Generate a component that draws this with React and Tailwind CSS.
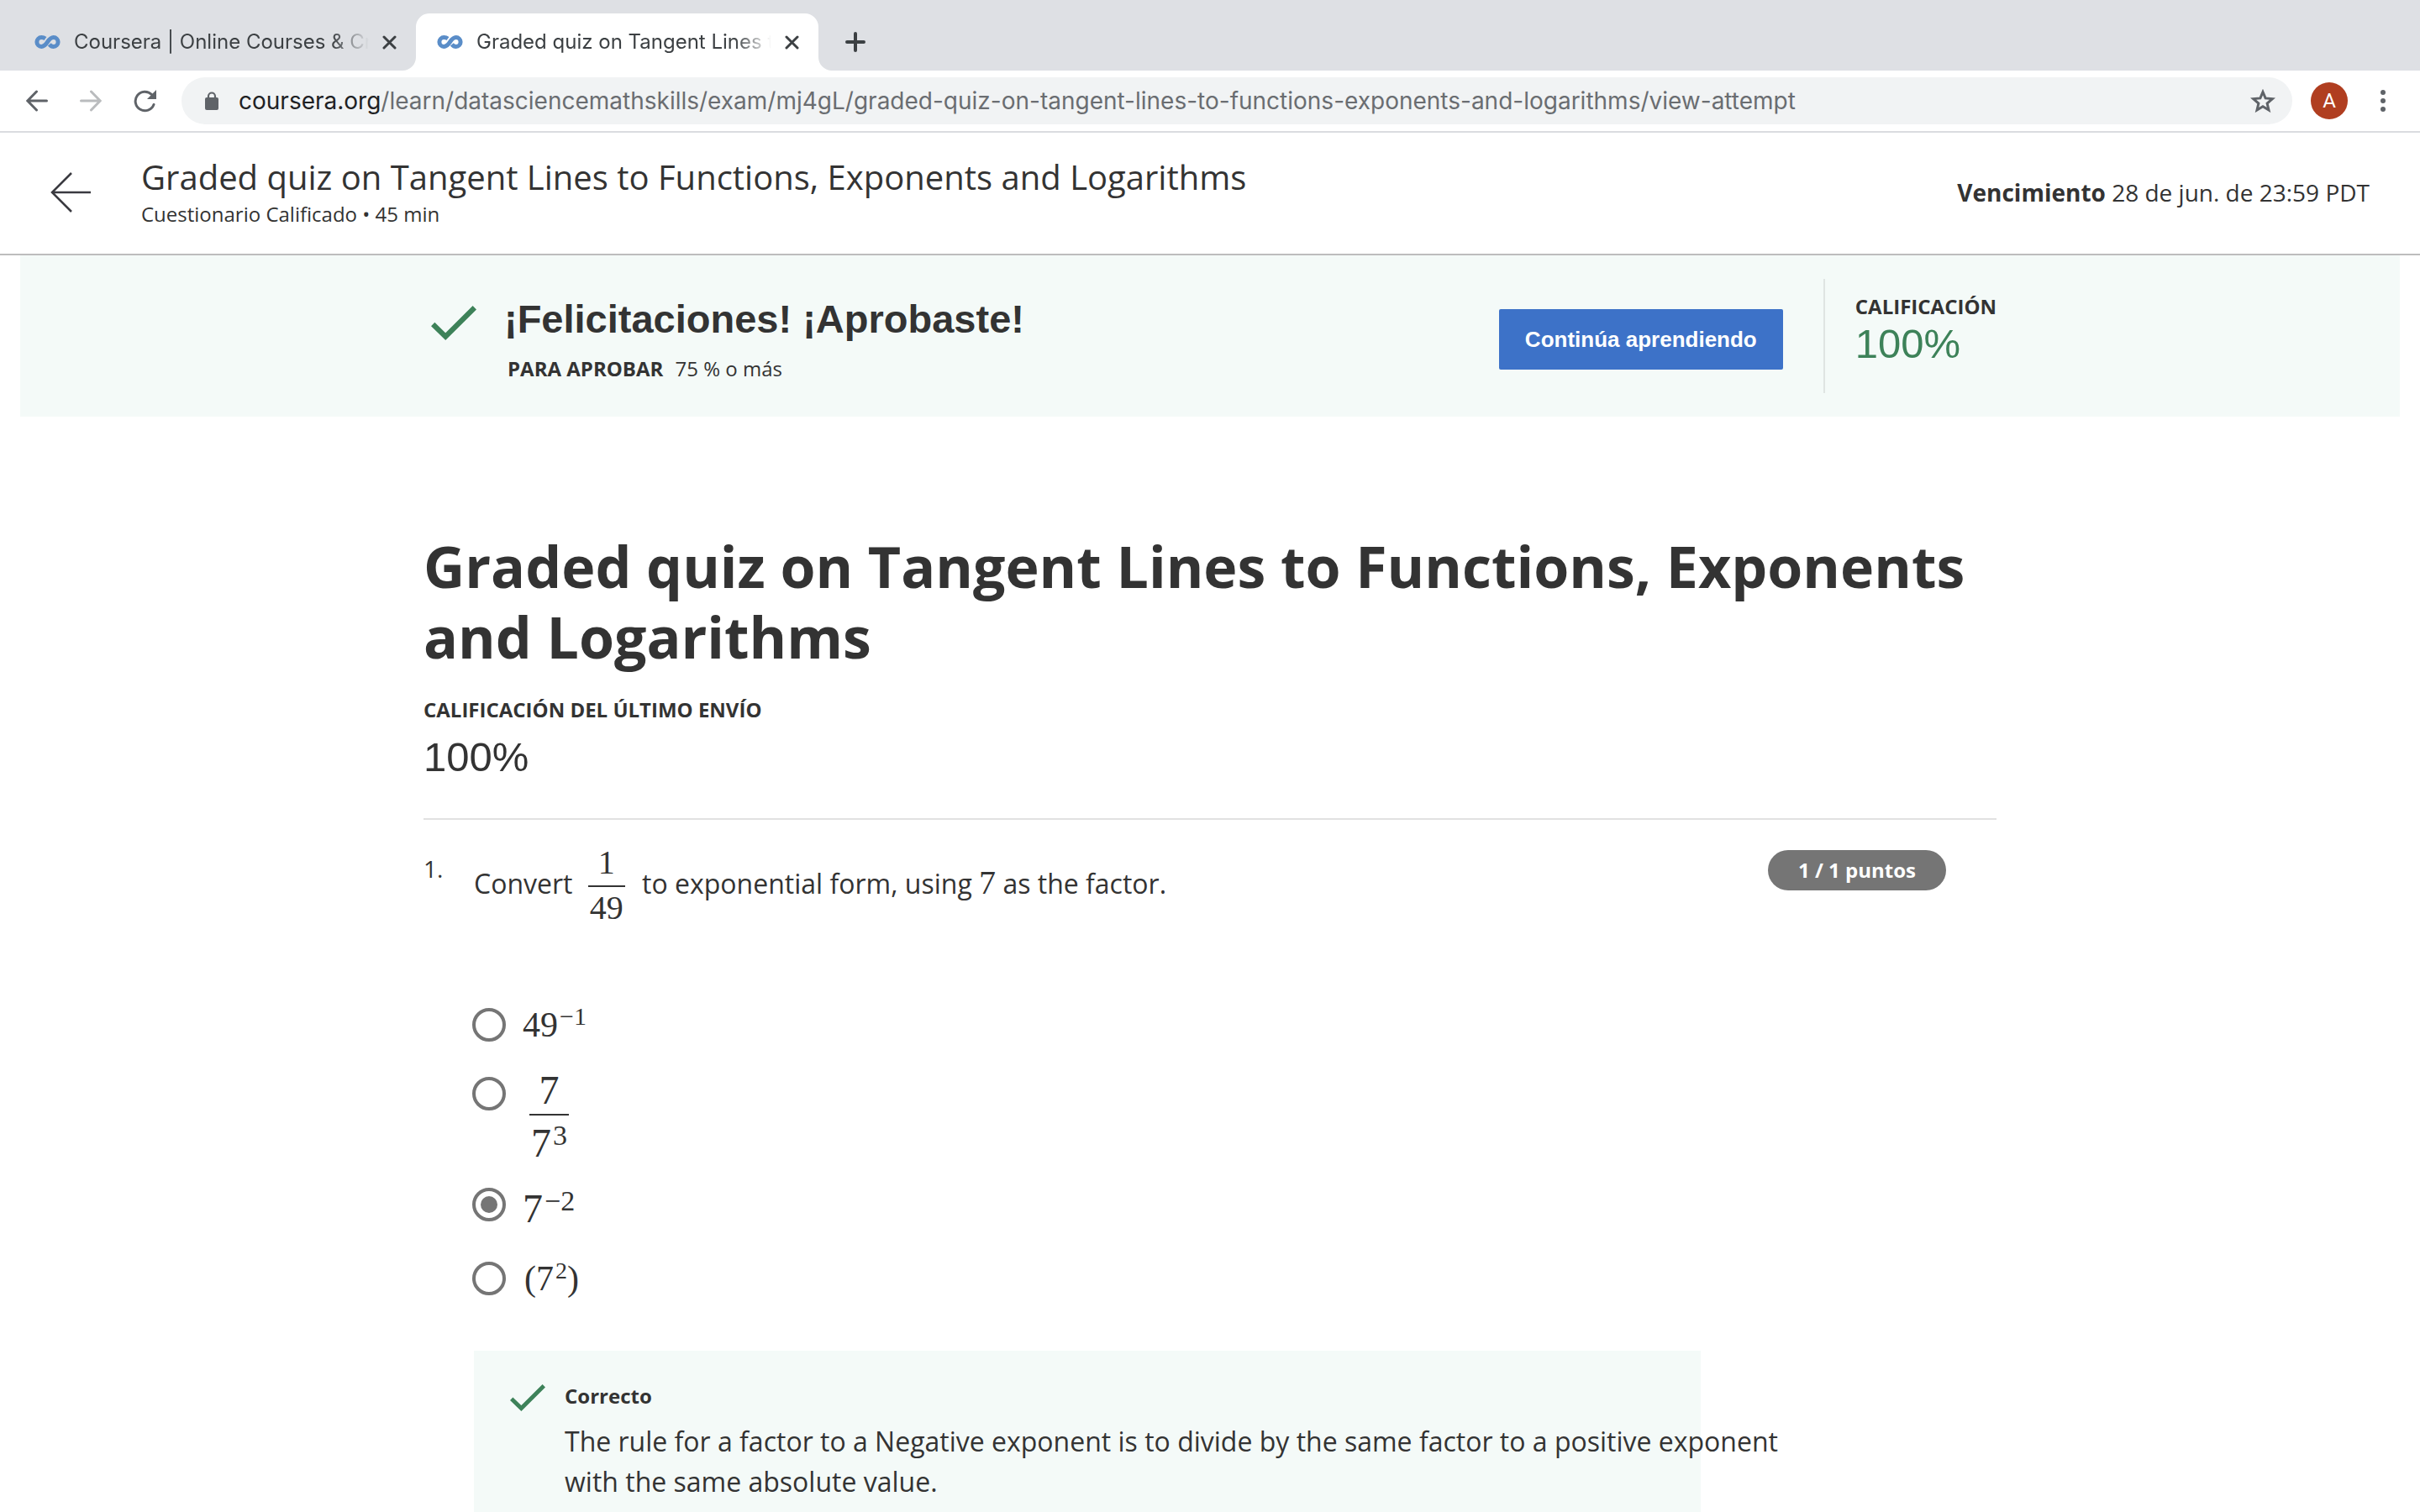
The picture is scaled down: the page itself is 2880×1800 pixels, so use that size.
import React from "react";

function Infinity() {
  return (
    <svg viewBox="0 0 31 16" className="h-4 w-[31px] shrink-0" fill="none" stroke="#5a8dc8" strokeWidth="5" aria-hidden="true">
      <path d="M13 4C11.500 2.900 10 2.600 8.300 2.600A5.400 5.400 0 0 0 8.300 13.400C15.500 13.400 15.500 2.600 22.700 2.600A5.400 5.400 0 0 1 22.700 13.400C20.800 13.400 19.200 12.500 17.800 10.800" />
    </svg>
  );
}

function Close() {
  return (
    <svg viewBox="0 0 17 17" className="size-[17px]" stroke="#3c4043" strokeWidth="3" strokeLinecap="round" aria-hidden="true">
      <path d="M2 2l13 13M15 2L2 15" />
    </svg>
  );
}

function Tab({ title, active }) {
  return (
    <div className="relative flex h-[68px] w-[479px] items-center pr-[23px] pl-[25px]">
      {active && (
        <svg viewBox="0 0 511 68" className="absolute -left-4 top-0 h-[68px] w-[511px]" fill="#fff" aria-hidden="true">
          <path d="M0 68a16 16 0 0 0 16-16V16A16 16 0 0 1 32 0h447a16 16 0 0 1 16 16v36a16 16 0 0 0 16 16z" />
        </svg>
      )}
      <div className="relative flex min-w-0 grow items-center gap-4">
        <Infinity />
        <span className="min-w-0 grow whitespace-nowrap font-['Inter',sans-serif] text-2xl text-[#3c4043] mask-r-from-[calc(100%-44px)]">{title}</span>
        <button aria-label="Cerrar" className="shrink-0"><Close /></button>
      </div>
    </div>
  );
}

function Check({ className }) {
  return (
    <svg viewBox="0 0 54 41" className={className} fill="none" stroke="#3d8259" strokeWidth="6.200" aria-hidden="true">
      <path d="M2.200 22l15 14.600L51.800 2.200" />
    </svg>
  );
}

function Radio({ id, checked, rowClass, labelClass, children }) {
  return (
    <div className={`flex items-start gap-5 ${rowClass}`}>
      <input
        type="radio"
        name="q1"
        id={id}
        defaultChecked={checked}
        className="size-10 shrink-0 appearance-none rounded-full border-4 border-[#757575] bg-clip-content p-1.5 checked:bg-[#757575]"
      />
      <label htmlFor={id} className={`font-['Liberation_Serif',serif] text-[#333] ${labelClass}`}>{children}</label>
    </div>
  );
}

function Sup({ className, children }) {
  return <sup className={`relative -top-3.5 ml-0.5 align-baseline leading-none ${className}`}>{children}</sup>;
}

function Fraction({ top, bottom, topClass, bottomClass }) {
  return (
    <span className="inline-flex flex-col items-center align-middle font-['Liberation_Serif',serif]">
      <span className={`px-1 ${topClass}`}>{top}</span>
      <span className={`w-full border-t-2 border-[#333] px-0.5 text-center ${bottomClass}`}>{bottom}</span>
    </span>
  );
}

function Browser() {
  return (
    <div className="bg-white">
      <div className="flex h-[84px] items-end bg-[#dee0e4] pl-4">
        <Tab title="Coursera | Online Courses & Cr" />
        <Tab title="Graded quiz on Tangent Lines t" active />
        <button aria-label="Nueva pestaña" className="mb-[22px] ml-8">
          <svg viewBox="0 0 24 24" className="size-6" stroke="#3c4043" strokeWidth="4" strokeLinecap="round" aria-hidden="true"><path d="M12 2v20M2 12h20" /></svg>
        </button>
      </div>
      <div className="flex items-center border-b-2 border-[#dadce0] pr-10 pl-[31px] py-2">
        <button aria-label="Atrás" className="mr-[38px]">
          <svg viewBox="0 0 26 26" className="size-[26px]" fill="none" stroke="#5f6368" strokeWidth="3" strokeLinecap="round" aria-hidden="true"><path d="M24.500 13H2.500M12.500 2L1.800 13l10.700 11" /></svg>
        </button>
        <button aria-label="Adelante" className="mr-[38px]">
          <svg viewBox="0 0 26 26" className="size-[26px]" fill="none" stroke="#babcbe" strokeWidth="3" strokeLinecap="round" aria-hidden="true"><path d="M1.500 13h22M13.500 2l10.700 11-10.700 11" /></svg>
        </button>
        <button aria-label="Recargar" className="mr-[30px]">
          <svg viewBox="0 0 27 27" className="size-[27px]" fill="none" aria-hidden="true"><path d="M24 17.500A11.300 11.300 0 1 1 21.500 5.500" stroke="#5f6368" strokeWidth="3" strokeLinecap="round" /><path d="M27 0v11H16z" fill="#5f6368" /></svg>
        </button>
        <div className="flex h-14 grow items-center rounded-full bg-[#f1f3f4] pr-5 pl-7">
          <svg viewBox="0 0 16 22" className="mr-6 h-[22px] w-4" aria-hidden="true"><rect y="7" width="16" height="15" rx="2" fill="#5f6368" /><path d="M4 9V5.500a4 4 0 0 1 8 0V9" fill="none" stroke="#5f6368" strokeWidth="2.200" /></svg>
          <div className="grow font-['Inter',sans-serif] text-[28px] leading-8 text-[#6a6d71]"><span className="text-[#202124]">coursera.org</span>/learn/datasciencemathskills/exam/mj4gL/graded-quiz-on-tangent-lines-to-functions-exponents-and-logarithms/view-attempt</div>
          <button aria-label="Marcar">
            <svg viewBox="0 0 30 28" className="h-7 w-[30px]" fill="none" stroke="#5f6368" strokeWidth="3" aria-hidden="true"><path d="M15 3.500l3.100 7.400 8.300.7-6.300 5.400 1.900 8-7-4.200-7 4.200 1.900-8-6.300-5.400 8.300-.7z" /></svg>
          </button>
        </div>
        <button aria-label="Cuenta" className="ml-[22px] size-11 rounded-full bg-[#b03e20] font-['Roboto',sans-serif] text-2xl text-white">A</button>
        <button aria-label="Menú" className="ml-[38px]">
          <svg viewBox="0 0 8 26" className="h-[26px] w-2" fill="#5f6368" aria-hidden="true"><circle cx="4" cy="3" r="3" /><circle cx="4" cy="13" r="3" /><circle cx="4" cy="23" r="3" /></svg>
        </button>
      </div>
    </div>
  );
}

export default function App() {
  return (
    <div className="h-screen overflow-hidden bg-white font-['Open_Sans',sans-serif] text-[#333]">
      <Browser />
      <header className="flex h-[146px] items-center border-b-2 border-[#bdbdbd] px-[60px] pb-0.5">
        <button aria-label="Volver" className="mr-[60px]">
          <svg viewBox="0 0 48 48" className="size-12" fill="none" stroke="#3a3a40" strokeWidth="2.500" aria-hidden="true"><path d="M48 24H2M25 1L2 24l23 23" /></svg>
        </button>
        <div className="grow">
          <h2 className="text-[40px] leading-[52px]">Graded quiz on Tangent Lines to Functions, Exponents and Logarithms</h2>
          <p className="text-2xl leading-9">Cuestionario Calificado • 45 min</p>
        </div>
        <p className="text-[28px]"><b>Vencimiento</b> 28 de jun. de 23:59 PDT</p>
      </header>
      <section className="mx-6 h-[192px] bg-[#f4faf8] pt-7">
        <div className="mx-auto flex w-[1872px] justify-between">
          <div className="flex pt-3 pl-[9px]">
            <Check className="mt-5 h-[41px] w-[54px]" />
            <div className="ml-[33px]">
              <h2 className="font-['Liberation_Sans',sans-serif] text-[47px] leading-[72px] font-bold">¡Felicitaciones! ¡Aprobaste!</h2>
              <p className="mt-[5px] pl-1 text-2xl leading-9"><b className="mr-2">PARA APROBAR</b> 75 % o más</p>
            </div>
          </div>
          <div className="flex">
            <button className="mt-9 mr-12 h-[72px] w-[338px] rounded-xs bg-[#3d72c8] font-['Liberation_Sans',sans-serif] text-[26px] font-bold text-white">Continúa aprendiendo</button>
            <div className="h-[136px] border-l-2 border-[#dfe4e2] pt-[15px] pl-9">
              <p className="text-2xl leading-9 font-bold">CALIFICACIÓN</p>
              <p className="font-['Liberation_Sans',sans-serif] text-[49px] leading-[52px] text-[#3d8259]">100%</p>
            </div>
          </div>
        </div>
      </section>
      <main className="mx-auto w-[1872px]">
        <h1 className="mt-[136px] text-[68px] leading-[84px] font-bold">Graded quiz on Tangent Lines to Functions, Exponents and Logarithms</h1>
        <p className="mt-[27px] text-2xl leading-9 font-bold">CALIFICACIÓN DEL ÚLTIMO ENVÍO</p>
        <p className="font-['Liberation_Sans',sans-serif] text-[49px] leading-[76px]">100%</p>
        <div className="mt-[35px] flex items-start border-t-2 border-[#e1e1e1] pt-9">
          <span className="w-[60px] shrink-0 text-[28px] leading-[44px]">1.</span>
          <div className="grow">
            <p className="-mt-3 text-[32px] leading-[52px]">Convert <span className="mr-3 ml-2.5 text-[40px]"><Fraction top="1" bottom="49" topClass="leading-[54px]" bottomClass="leading-[50px]" /></span> to exponential form, using <span className="font-['Liberation_Serif',serif] text-[40px]">7</span> as the factor.</p>
            <fieldset className="mt-[94px] -ml-0.5 flex flex-col">
              <Radio id="a" rowClass="h-[82px]" labelClass="text-[42px] leading-10">49<Sup className="text-[30px]">−1</Sup></Radio>
              <Radio id="b" rowClass="h-[132px]" labelClass="flex pl-2 text-[48px]">
                <Fraction top="7" bottom={<>7<Sup className="text-[34px]">3</Sup></>} topClass="pb-3 leading-8" bottomClass="pt-2 leading-[50px]" />
              </Radio>
              <Radio id="c" rowClass="h-[88px]" labelClass="text-[48px] leading-[50px]" checked>7<Sup className="text-[34px]">−2</Sup></Radio>
              <Radio id="d" rowClass="h-10" labelClass="pl-0.5 text-[42px] leading-10">(7<Sup className="text-[28px]">2</Sup>)</Radio>
            </fieldset>
            <div className="mt-[66px] flex w-[1460px] bg-[#f4faf8] pt-9 pb-10 pl-[43px]">
              <Check className="mt-1 h-8 w-[42px] shrink-0" />
              <div className="ml-[23px] shrink-0">
                <p className="text-2xl leading-9 font-bold">Correcto</p>
                <p className="mt-3 w-[1460px] text-[32px] leading-[48px]">The rule for a factor to a Negative exponent is to divide by the same factor to a positive exponent<br />with the same absolute value.</p>
              </div>
            </div>
          </div>
          <span className="mr-[60px] shrink-0 rounded-full bg-[#757575] px-9 text-2xl leading-[48px] font-bold text-white">1 / 1 puntos</span>
        </div>
      </main>
    </div>
  );
}
